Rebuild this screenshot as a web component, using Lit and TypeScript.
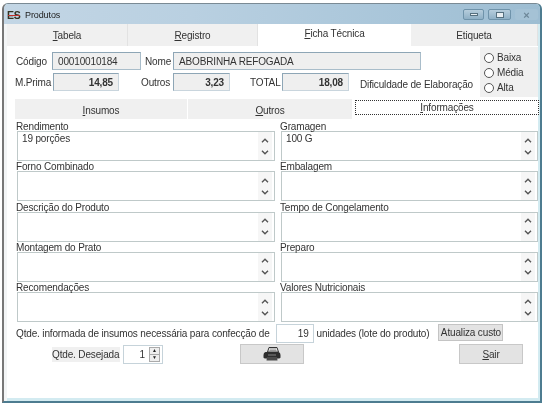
import { LitElement, html, css, svg } from "lit";
import { customElement } from "lit/decorators.js";

const chevrons = html`<span class="scroll">
  <svg width="8" height="5" viewBox="0 0 8 5"><path d="M1 4.2 L4 1.2 L7 4.2" fill="none" stroke="#555" stroke-width="1.4"/></svg>
  <svg width="8" height="5" viewBox="0 0 8 5"><path d="M1 .8 L4 3.8 L7 .8" fill="none" stroke="#555" stroke-width="1.4"/></svg>
</span>`;

const printer = svg`<svg width="18" height="14" viewBox="0 0 18 14">
  <path d="M6 .5 L14 .5 L15.5 5 L4.5 5 Z" fill="#e4e4e4" stroke="#333" stroke-width="1"/>
  <path d="M7 2 H13 M6.5 3.5 H13.5" stroke="#666" stroke-width=".6"/>
  <path d="M2.5 5 H15.5 Q17.5 5.5 17.5 8 V10.5 Q17.5 11.5 15.5 11.5 H2.5 Q.5 11.5 .5 10.5 V8 Q.5 5.5 2.5 5 Z" fill="#2e2e2e"/>
  <path d="M4 10 H14 L14.5 13.5 H3.5 Z" fill="#4a4a4a"/>
  <path d="M5 8 H13" stroke="#999" stroke-width=".8"/>
</svg>`;

@customElement("app-root")
export class AppRoot extends LitElement {
  static styles = css`
    :host { display: block; width: 544px; height: 405px; background: #fff; font-family: "Liberation Sans", Arial, sans-serif; font-size: 10px; letter-spacing: -.15px; color: #333; filter: blur(0.35px); }
    * { box-sizing: border-box; }
    .win { margin: 0 2px; position: relative; top: 3px; width: 540px; height: 400px; border-radius: 6px 6px 0 0; border-top: 1px solid #7a8a94; border-left: 2px solid #777; border-right: 2px solid #4d7c90; border-bottom: 2px solid #4d7c90; display: flex; flex-direction: column; overflow: hidden; background: #d3ebf1; padding: 0 2px 3px 0; }
    .title { height: 20px; flex: none; display: flex; align-items: center; padding: 1px 2px 0 3px; margin-right: -2px; background: linear-gradient(90deg, #c3d6e5 0, #b9d0e1 35%, #a8c5d9 75%, #9dbdd2 100%); color: #222; }
    .logo { position: relative; font-weight: 700; font-size: 10.5px; color: #332; letter-spacing: -.3px; width: 13px; margin-right: 5px; }
    .logo::after { content: ""; position: absolute; left: 1px; right: 0; top: 6px; height: 1px; background: #c0302a; }
    .title .t { flex: 1; font-size: 9px; letter-spacing: -.1px; }
    .wbtn { height: 11px; width: 23px; border: 1px solid #6f93aa; background: linear-gradient(#b6cddc, #8fb0c6); display: grid; place-items: center; margin-left: 4px; border-radius: 2px; }
    .wbtn.min { width: 21px; }
    .wbtn i { display: block; width: 8px; height: 3px; background: #e8eef2; border: 1px solid #56707f; }
    .wbtn.max i { height: 6px; }
    .wbtn.x { border-color: transparent; background: #a5c2d5; color: #6d8798; font-size: 11px; line-height: 10px; font-weight: 700; }
    .body { flex: 1; background: #fff; margin-left: 3px; display: flex; flex-direction: column; min-height: 0; }
    .edge { position: absolute; left: 0; top: 20px; bottom: 0; width: 3px; background: #f3f5f6; }
    .tabs { display: grid; grid-template-columns: 121px 130px 153px 1fr; height: 22px; flex: none; }
    .tab { display: flex; align-items: center; justify-content: center; background: #f0f0f0; border-right: 1px solid #e2e2e2; }
    .tab.on { background: #fff; padding-bottom: 4px; border-right: 0; }
    u { text-underline-offset: 1px; }
    .head { position: relative; height: 53px; flex: none; padding: 6px 0 0 0; }
    .row { display: flex; align-items: center; height: 18px; }
    .row + .row { margin-top: 3px; }
    .inp { height: 18px; background: #efefef; border: 1px solid #a9bdca; border-top-color: #8ea6b6; border-left-color: #8ea6b6; padding: 0 3px 0 5px; display: flex; align-items: center; color: #333; flex: none; white-space: nowrap; }
    .num { justify-content: flex-end; font-weight: 700; padding-right: 5px; border-right-color: #c9d5dd; border-bottom-color: #c9d5dd; }
    .lbl { flex: none; white-space: nowrap; }
    .w28 { margin-left: 4px; width: 28px; }
    .lbl1 { margin-left: 9px; width: 36px; }
    .lbl2 { margin-left: 8px; width: 38px; }
    .lbl3 { margin-left: 22px; width: 32px; }
    .lbl4 { margin-left: 20px; width: 32px; }
    .dif { margin-left: 11px; margin-top: 4px; white-space: nowrap; }
    .i-cod { width: 89px; }
    .i-nome { width: 248px; }
    .i-m { width: 66px; }
    .i-o { width: 57px; }
    .i-t { width: 67px; }
    .radios { position: absolute; right: 0; top: 1px; width: 58px; height: 50px; background: #f0f0f0; padding: 3px 0 0 4px; display: flex; flex-direction: column; }
    .radio { display: flex; align-items: center; gap: 3px; height: 15px; }
    .radio i { width: 10px; height: 10px; border: 1px solid #555; border-radius: 50%; background: #fff; display: block; }
    .subtabs { display: grid; grid-template-columns: 173px 165px 187px; margin-left: 8px; height: 20px; flex: none; }
    .st { background: #f0f0f0; display: flex; align-items: center; justify-content: center; padding-top: 2px; margin-right: 1px; }
    .st.on { background: #fff; border: 1px dotted #333; margin: 1px 1px 4px 2px; padding: 0; }
    .fields { display: grid; grid-template-columns: 258px 257px; grid-auto-rows: 40px; row-gap: .25px; column-gap: 6px; padding: 2px 0 0 10px; flex: none; }
    .f { display: flex; flex-direction: column; }
    .f label { height: 10px; line-height: 10px; white-space: nowrap; margin-left: -1px; position: relative; top: 1px; }
    .box { height: 30px; border: 1px solid #bfc9c9; background: #fff; display: flex; justify-content: space-between; padding: 1px 0 0 4px; color: #333; }
    .scroll { width: 14px; margin-right: 2px; background: #f6f6f6; display: flex; flex-direction: column; align-items: center; justify-content: space-around; padding: 2px 0; margin-top: -1px; }
    .qty { display: flex; align-items: center; padding-left: 9px; height: 20px; margin-top: 1px; flex: none; white-space: nowrap; }
    .white { background: #fff; border: 1px solid #c6d3da; height: 19px; width: 38px; display: flex; align-items: center; justify-content: flex-end; padding-right: 4px; margin: 0 3px 0 6px; flex: none; }
    .upd { margin-left: 9px; width: 65px; height: 17px; background: #e3e3e3; border: 1px solid #c4c4c4; display: flex; align-items: center; justify-content: center; margin-top: -2px; flex: none; }
    .bottom { display: flex; align-items: center; height: 20px; margin-top: 1px; flex: none; padding-left: 45px; }
    .des { background: #f0f0f0; width: 68px; white-space: nowrap; flex: none; padding: 2px 0 2px 0; }
    .spin { margin-left: 3px; width: 40px; height: 19px; border: 1px solid #c6d3da; display: flex; align-items: center; justify-content: flex-end; flex: none; }
    .spin .v { margin-right: 4px; }
    .arrows { width: 11px; height: 15px; border: 1px solid #aaa; display: flex; flex-direction: column; margin-right: 2px; background: #eee; }
    .arrows span { flex: 1; display: grid; place-items: center; font-size: 5px; line-height: 5px; color: #222; }
    .arrows span + span { border-top: 1px solid #aaa; }
    .btn { height: 20px; width: 64px; background: #e3e3e3; border: 1px solid #c8c8c8; display: flex; align-items: center; justify-content: center; flex: none; }
    .print { margin-left: 77px; }
    .sair { margin-left: 155px; }
  `;

  field(label: string, value = "") {
    return html`<div class="f"><label>${label}</label><div class="box"><span>${value}</span>${chevrons}</div></div>`;
  }

  render() {
    return html`<div class="win">
      <div class="title">
        <span class="logo">ES</span><span class="t">Produtos</span>
        <span class="wbtn min"><i></i></span><span class="wbtn max"><i></i></span><span class="wbtn x">×</span>
      </div>
      <div class="edge"></div>
      <div class="body">
        <div class="tabs">
          <div class="tab"><span><u>T</u>abela</span></div>
          <div class="tab"><span><u>R</u>egistro</span></div>
          <div class="tab on"><span><u>F</u>icha Técnica</span></div>
          <div class="tab">Etiqueta</div>
        </div>
        <div class="head">
          <div class="row">
            <span class="lbl lbl1">Código</span><div class="inp i-cod">00010010184</div>
            <span class="lbl w28">Nome</span><div class="inp i-nome">ABOBRINHA REFOGADA</div>
          </div>
          <div class="row">
            <span class="lbl lbl2">M.Prima</span><div class="inp num i-m">14,85</div>
            <span class="lbl lbl3">Outros</span><div class="inp num i-o">3,23</div>
            <span class="lbl lbl4">TOTAL</span><div class="inp num i-t">18,08</div>
            <span class="dif">Dificuldade de Elaboração</span>
          </div>
          <div class="radios">
            <div class="radio"><i></i>Baixa</div>
            <div class="radio"><i></i>Média</div>
            <div class="radio"><i></i>Alta</div>
          </div>
        </div>
        <div class="subtabs">
          <div class="st"><span><u>I</u>nsumos</span></div>
          <div class="st"><span><u>O</u>utros</span></div>
          <div class="st on"><span><u>I</u>nformações</span></div>
        </div>
        <div class="fields">
          ${this.field("Rendimento", "19 porções")}${this.field("Gramagen", "100 G")}
          ${this.field("Forno Combinado")}${this.field("Embalagem")}
          ${this.field("Descrição do Produto")}${this.field("Tempo de Congelamento")}
          ${this.field("Montagem do Prato")}${this.field("Preparo")}
          ${this.field("Recomendações")}${this.field("Valores Nutricionais")}
        </div>
        <div class="qty">
          <span>Qtde. informada de insumos necessária para confecção de</span>
          <div class="white">19</div>
          <span>unidades (lote do produto)</span>
          <div class="upd">Atualiza custo</div>
        </div>
        <div class="bottom">
          <span class="des">Qtde. Desejada</span>
          <div class="spin"><span class="v">1</span><div class="arrows"><span>▲</span><span>▼</span></div></div>
          <div class="btn print">${printer}</div>
          <div class="btn sair"><span><u>S</u>air</span></div>
        </div>
      </div>
    </div>`;
  }
}
